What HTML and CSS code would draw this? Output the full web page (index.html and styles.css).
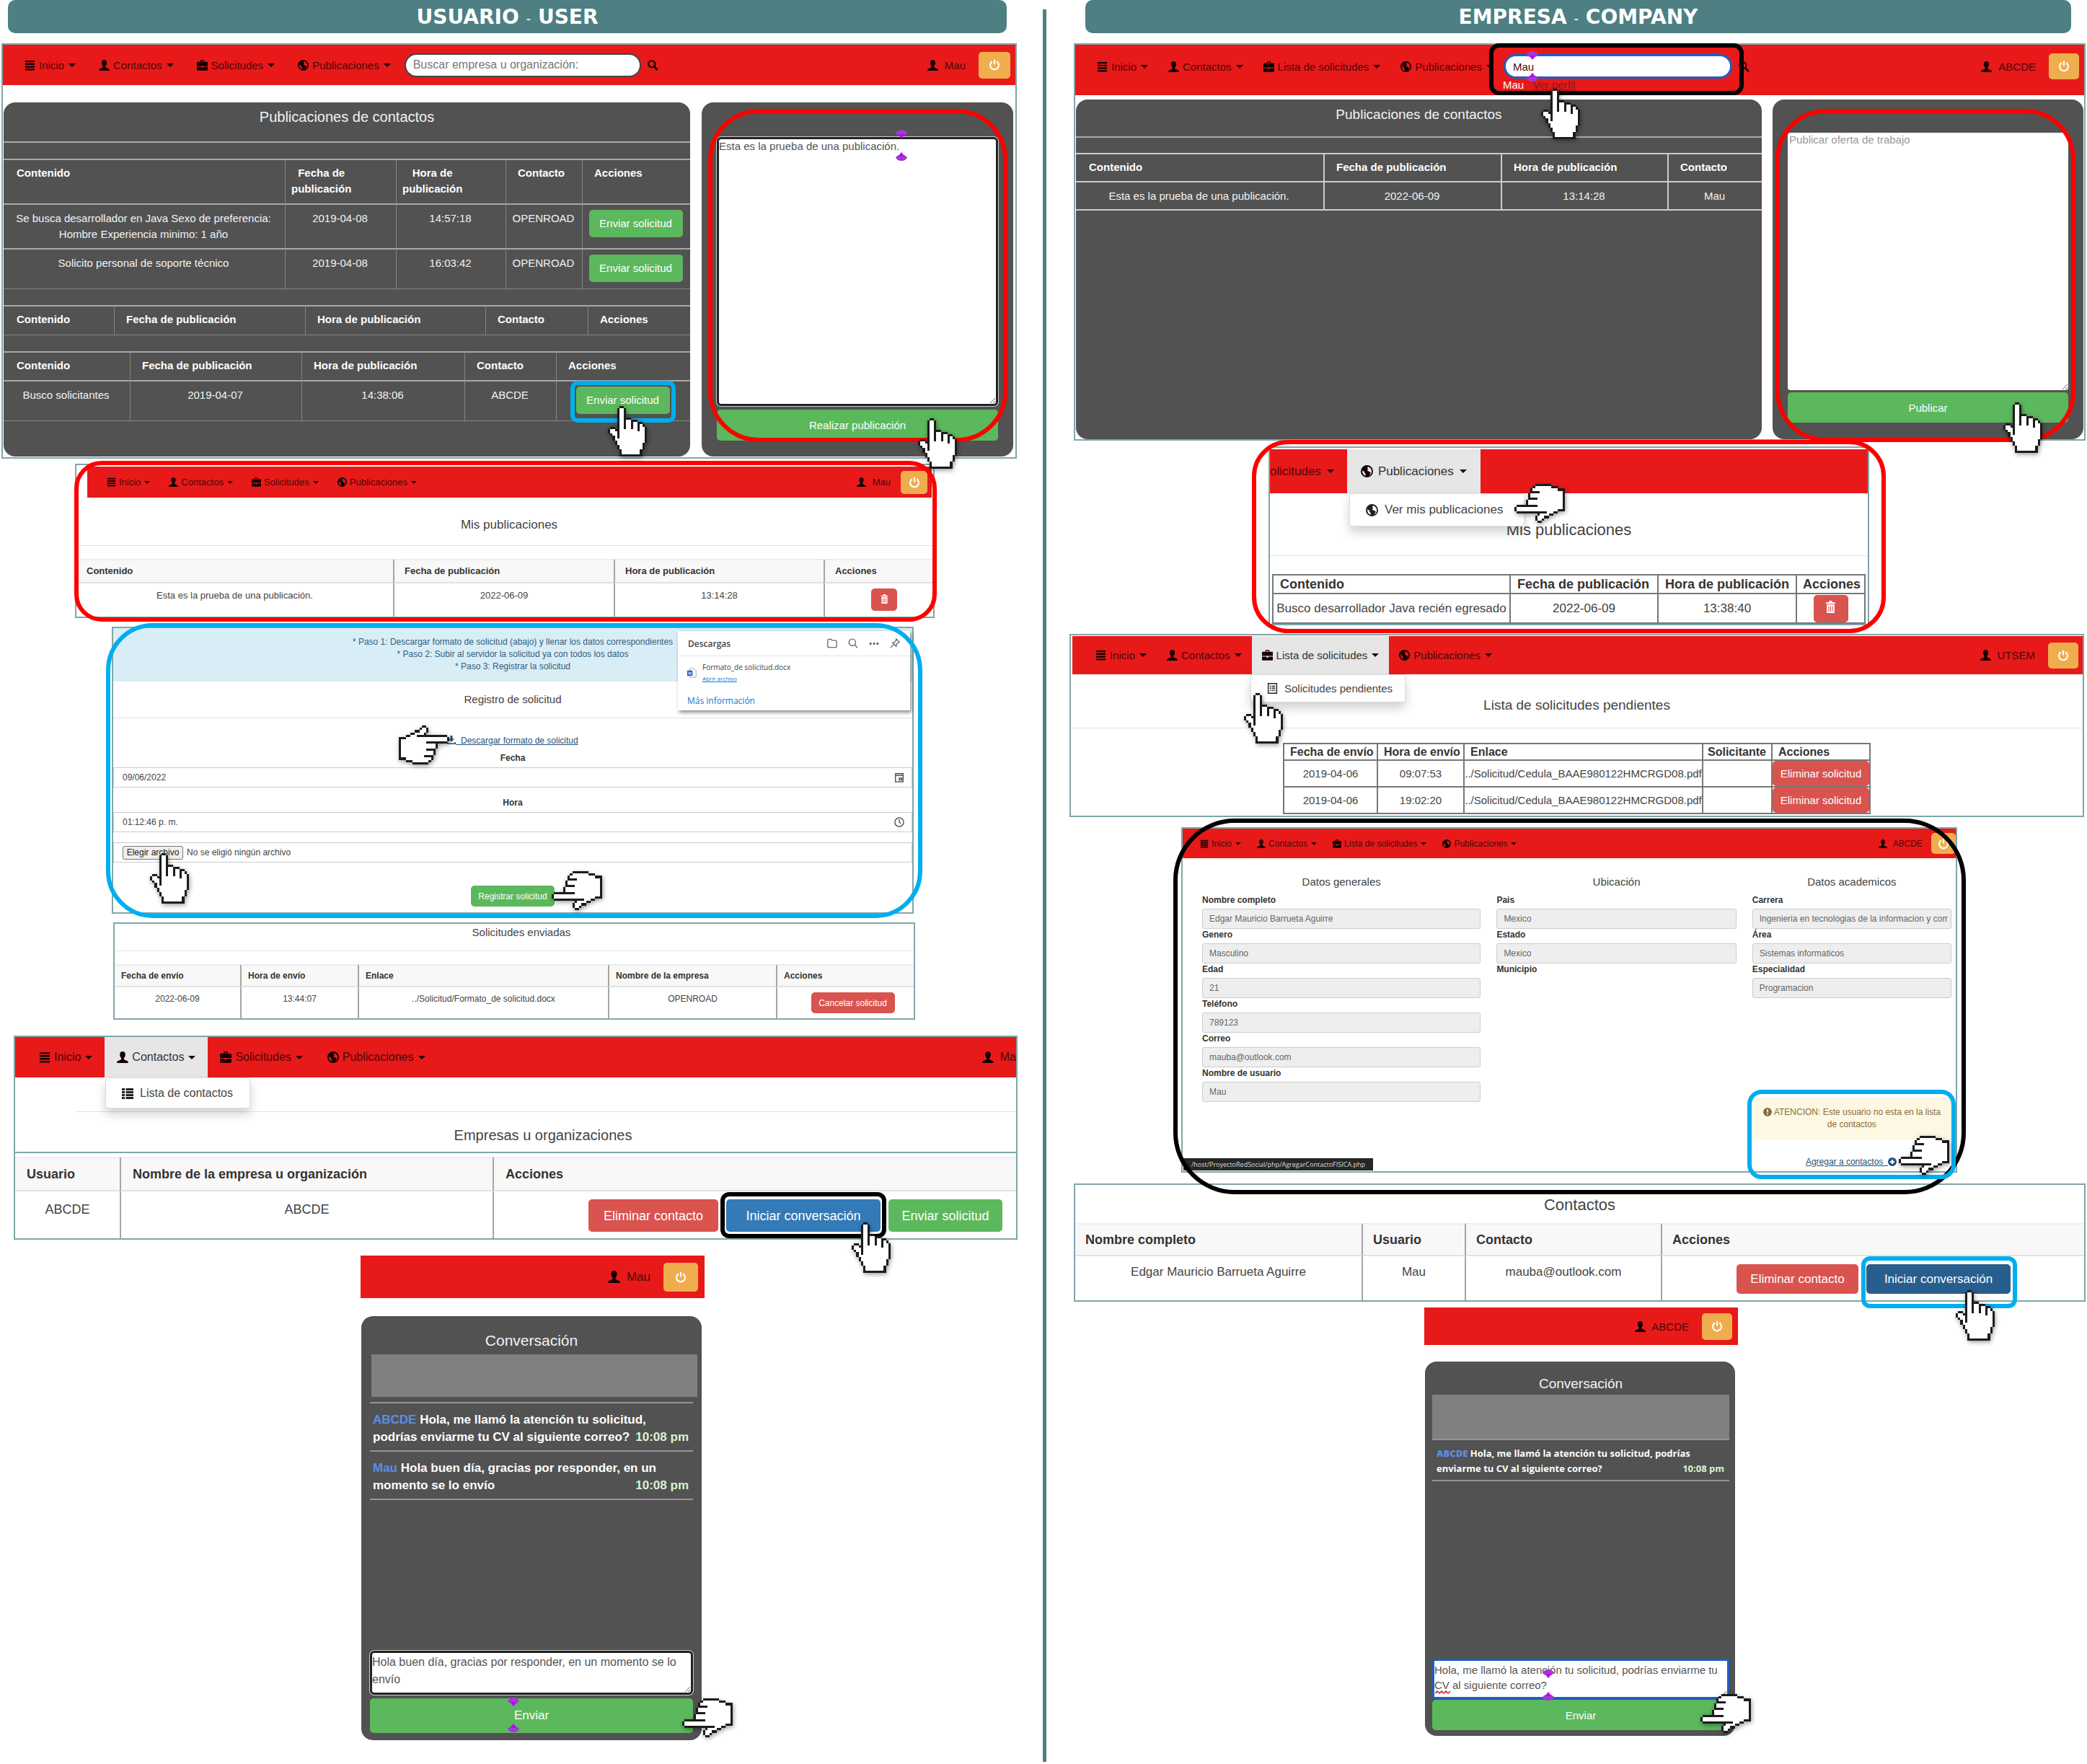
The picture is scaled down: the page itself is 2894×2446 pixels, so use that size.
FILE: index.html
```html
<!DOCTYPE html>
<html lang="es">
<head>
<meta charset="utf-8">
<meta name="viewport" content="width=device-width, initial-scale=1">
<title>Usuario - Empresa</title>
<link rel="stylesheet" href="styles.css">
</head>
<body>
<svg class="defs" aria-hidden="true">
  <symbol id="i-menu" viewBox="0 0 16 16"><path d="M1 1h14v2.500H1zM1 5h14v2.500H1zM1 9h14v2.500H1zM1 13h14v2.500H1z"/></symbol>
  <symbol id="i-user" viewBox="0 0 16 16"><path d="M8 0c2.600 0 3.800 1.800 3.800 4.200 0 2-.8 3.800-1.900 4.900v1.300c0 .5.300.8.900 1.100l3.600 1.600c1 .5 1.400 1.100 1.400 2.400v.5H.2v-.5c0-1.300.4-1.900 1.400-2.400l3.600-1.600c.6-.3.900-.6.900-1.100V9.100C5 8 4.200 6.200 4.200 4.200 4.200 1.800 5.400 0 8 0z"/></symbol>
  <symbol id="i-case" viewBox="0 0 16 16"><path fill-rule="evenodd" d="M5 3V1.500C5 .7 5.500.2 6.300.2h3.400c.8 0 1.300.5 1.300 1.300V3h3.700c.8 0 1.300.5 1.300 1.300V9H0V4.300C0 3.500.5 3 1.300 3zM6.500 3h3V1.600h-3zM0 10h6.500v1.500h3V10H16v4.400c0 .8-.5 1.300-1.300 1.300H1.300C.5 15.700 0 15.200 0 14.400z"/></symbol>
  <symbol id="i-globe" viewBox="0 0 16 16"><path fill-rule="evenodd" d="M8 0a8 8 0 1 1 0 16A8 8 0 0 1 8 0zM9.500 2.200L8.300 3.600l1.200 1.700-1.300 2 1.800.6 2.800 1.300-.4 2.600-1.800 1.900c2.400-.9 3.800-3.200 3.600-6-.2-2.600-2-4.800-4.700-5.500zM2.200 6.600C1.500 9.800 3.200 12.900 6 13.900l.3-2.300-1.600-1.800.3-1.500-1.600-.3z"/></symbol>
  <symbol id="i-search" viewBox="0 0 16 16"><path fill="none" stroke="currentColor" stroke-width="2.200" d="M11 6.200a4.900 4.900 0 1 1-9.800 0 4.900 4.900 0 0 1 9.800 0z"/><path fill="none" stroke="currentColor" stroke-width="3" d="M9.800 10l4.900 5"/></symbol>
  <symbol id="i-power" viewBox="0 0 16 16"><path fill="none" stroke="currentColor" stroke-width="2.200" d="M4.800 3.200a6 6 0 1 0 6.400 0M8 .8v6.700"/></symbol>
  <symbol id="i-trash" viewBox="0 0 16 16"><path fill-rule="evenodd" d="M6 0h4v2h4v2H2V2h4zM3 5h10v11H3zM5 7v7h1V7zM7.500 7v7h1V7zM10 7v7h1V7z"/></symbol>
  <symbol id="i-thlist" viewBox="0 0 16 16"><path d="M0 1h4v3H0zM0 5h4v3H0zM0 9h4v3H0zM0 13h4v3H0zM5.500 1H16v3H5.500zM5.500 5H16v3H5.500zM5.500 9H16v3H5.500zM5.500 13H16v3H5.500z"/></symbol>
  <symbol id="i-listalt" viewBox="0 0 16 16"><path fill-rule="evenodd" d="M1 0h14v16H1zM2.500 1.500v13h11v-13zM4 4h2v1.500H4zM7 4h5v1.500H7zM4 7h2v1.500H4zM7 7h5v1.500H7zM4 10h2v1.500H4zM7 10h5v1.500H7z"/></symbol>
  <symbol id="i-down" viewBox="0 0 16 16"><path d="M6 0h4v6h3.500L8 11.500 2.500 6H6zM0 12h2v2h12v-2h2v4H0z"/></symbol>
  <symbol id="i-alert" viewBox="0 0 16 16"><path fill-rule="evenodd" d="M8 0a8 8 0 1 1 0 16A8 8 0 0 1 8 0zM6.700 3l.4 6h1.800l.4-6zM6.800 10.500v2.400h2.400v-2.400z"/></symbol>
  <symbol id="i-plus" viewBox="0 0 16 16"><path fill-rule="evenodd" d="M8 0a8 8 0 1 1 0 16A8 8 0 0 1 8 0zM6.500 4v2.500H4v3h2.500V12h3V9.500H12v-3H9.500V4z"/></symbol>
  <symbol id="i-folder" viewBox="0 0 16 16"><path fill="none" stroke="currentColor" stroke-width="1.200" d="M1 3.500C1 2 1.500 1.500 3 1.500h3l2 2h5c1.500 0 2 .5 2 2v7c0 1.500-.5 2-2 2H3c-1.500 0-2-.5-2-2z"/></symbol>
  <symbol id="i-find" viewBox="0 0 16 16"><path fill="none" stroke="currentColor" stroke-width="1.300" d="M12 6.500a5.300 5.300 0 1 1-10.600 0 5.300 5.300 0 0 1 10.600 0zM10.500 10.500l4.500 4.800"/></symbol>
  <symbol id="i-dots" viewBox="0 0 16 16"><path d="M1 7h3v3H1zM6.500 7h3v3h-3zM12 7h3v3h-3z"/></symbol>
  <symbol id="i-pin" viewBox="0 0 16 16"><path fill="none" stroke="currentColor" stroke-width="1.200" d="M10 1l5 5-2 1-2.500 2.500-.5 3.500-6-6 3.500-.5L10 3zM6 10l-5 5"/></symbol>
  <symbol id="i-word" viewBox="0 0 16 16"><path fill="#fff" stroke="#999" d="M4 .5h7l4 4v11H4z"/><path fill="#185abd" d="M0 4h9v9H0z"/><path fill="none" stroke="#fff" d="M2 6l1.200 5 1.300-4 1.300 4L7 6"/></symbol>
  <symbol id="i-cal" viewBox="0 0 16 16"><path fill="none" stroke="currentColor" stroke-width="1.500" d="M2 2h12v13H2zM2 5h12M8 9h4v3H8z"/></symbol>
  <symbol id="i-clock" viewBox="0 0 16 16"><path fill="none" stroke="currentColor" stroke-width="1.500" d="M15 8A7 7 0 1 1 1 8a7 7 0 0 1 14 0zM8 3.500V8l2.500 2"/></symbol>
  <symbol id="mark" viewBox="0 0 16 12"><path fill="#a03cd0" d="M0 5C1 2 4 0 8 0s7 2 8 5c-1 1-3 2-4 3H4C3 7 1 6 0 5z"/><path fill="#bf00ff" d="M4 6h8c-1 2-2 4-4 6-2-2-3-4-4-6z"/></symbol>
  <g id="hand-art" shape-rendering="crispEdges"><path fill="#fff" d="M5 1H7V6H10V7H13V8H15V9H16V16H15V19H14V21H6V19H5V17H4V15H3V13H2V12H1V10H3V11H5z"/><path fill="#1c1c1c" d="M5 0h2v1h-2zM4 1h1v13h-1zM7 1h1v9h-1zM8 5h2v1h-2zM10 6h1v4h-1zM11 6h2v1h-2zM13 7h1v4h-1zM14 7h1v1h-1zM15 8h1v1h-1zM16 9h1v7h-1zM15 16h1v3h-1zM14 19h1v3h-1zM5 21h10v1h-10zM5 19h1v3h-1zM4 17h1v2h-1zM3 15h1v2h-1zM2 13h1v2h-1zM1 12h1v1h-1zM0 10h1v2h-1zM1 9h2v1h-2zM3 10h1v1h-1z"/></g>
  <symbol id="hand-up" viewBox="0 0 17 22"><use href="#hand-art"/></symbol>
  <symbol id="hand-right" viewBox="0 0 22 17"><use href="#hand-art" transform="translate(22 0) rotate(90)"/></symbol>
  <symbol id="hand-left" viewBox="0 0 22 17"><use href="#hand-art" transform="translate(0 17) rotate(-90)"/></symbol>
</svg>

<main class="board">
  <section class="side">
    <h1 class="banner banner-user">USUARIO <span>-</span> USER</h1>

    <section class="screen s-home">
      <nav class="nav">
        <a href="#"><svg class="ic"><use href="#i-menu"/></svg>Inicio<i class="caret"></i></a>
        <a href="#"><svg class="ic"><use href="#i-user"/></svg>Contactos<i class="caret"></i></a>
        <a href="#"><svg class="ic"><use href="#i-case"/></svg>Solicitudes<i class="caret"></i></a>
        <a href="#"><svg class="ic"><use href="#i-globe"/></svg>Publicaciones<i class="caret"></i></a>
        <input class="search" type="text" aria-label="Buscar" placeholder="Buscar empresa u organización:">
        <svg class="ic lens"><use href="#i-search"/></svg>
        <span class="who"><svg class="ic"><use href="#i-user"/></svg>Mau</span>
        <button class="power" aria-label="Salir"><svg class="ic"><use href="#i-power"/></svg></button>
      </nav>
      <div class="panels">
        <div class="panel">
          <h2>Publicaciones de contactos</h2>
          <hr>
          <table class="dark t1">
            <tr><th>Contenido</th><th><span>Fecha de<br>publicación</span></th><th><span>Hora de<br>publicación</span></th><th>Contacto</th><th>Acciones</th></tr>
            <tr><td>Se busca desarrollador en Java Sexo de preferencia: Hombre Experiencia minimo: 1 año</td><td>2019-04-08</td><td>14:57:18</td><td>OPENROAD</td><td><button class="btn green">Enviar solicitud</button></td></tr>
            <tr><td>Solicito personal de soporte técnico</td><td>2019-04-08</td><td>16:03:42</td><td>OPENROAD</td><td><button class="btn green">Enviar solicitud</button></td></tr>
          </table>
          <table class="dark t2">
            <tr><th>Contenido</th><th>Fecha de publicación</th><th>Hora de publicación</th><th>Contacto</th><th>Acciones</th></tr>
          </table>
          <table class="dark t3">
            <tr><th>Contenido</th><th>Fecha de publicación</th><th>Hora de publicación</th><th>Contacto</th><th>Acciones</th></tr>
            <tr><td>Busco solicitantes</td><td>2019-04-07</td><td>14:38:06</td><td>ABCDE</td><td><button class="btn green">Enviar solicitud</button></td></tr>
          </table>
        </div>
        <div class="panel post">
          <textarea class="focus-dark" aria-label="Publicación">Esta es la prueba de una publicación.</textarea>
          <button class="btn green">Realizar publicación</button>
        </div>
      </div>
      <div class="hl cyan h-send"></div>
      <div class="hl red h-post"></div>
      <svg class="mark m1"><use href="#mark"/></svg>
      <svg class="mark flip m2"><use href="#mark"/></svg>
      <svg class="hand p-send"><use href="#hand-up"/></svg>
      <svg class="hand p-post"><use href="#hand-up"/></svg>
    </section>

    <section class="screen s-mine">
      <nav class="nav">
        <a href="#"><svg class="ic"><use href="#i-menu"/></svg>Inicio<i class="caret"></i></a>
        <a href="#"><svg class="ic"><use href="#i-user"/></svg>Contactos<i class="caret"></i></a>
        <a href="#"><svg class="ic"><use href="#i-case"/></svg>Solicitudes<i class="caret"></i></a>
        <a href="#"><svg class="ic"><use href="#i-globe"/></svg>Publicaciones<i class="caret"></i></a>
        <span class="who"><svg class="ic"><use href="#i-user"/></svg>Mau</span>
        <button class="power" aria-label="Salir"><svg class="ic"><use href="#i-power"/></svg></button>
      </nav>
      <h2>Mis publicaciones</h2>
      <hr>
      <table class="light">
        <tr><th>Contenido</th><th>Fecha de publicación</th><th>Hora de publicación</th><th>Acciones</th></tr>
        <tr><td>Esta es la prueba de una publicación.</td><td>2022-06-09</td><td>13:14:28</td><td><button class="btn danger" aria-label="Eliminar"><svg class="ic"><use href="#i-trash"/></svg></button></td></tr>
      </table>
      <div class="hl red h-mine"></div>
    </section>

    <section class="screen s-register">
      <p class="steps">* Paso 1: Descargar formato de solicitud (abajo) y llenar los datos correspondientes<br>* Paso 2: Subir al servidor la solicitud ya con todos los datos<br>* Paso 3: Registrar la solicitud</p>
      <h2>Registro de solicitud</h2>
      <hr>
      <a class="dl" href="#"><svg class="ic"><use href="#i-down"/></svg>&nbsp; Descargar formato de solicitud</a>
      <label for="fecha">Fecha</label>
      <div class="field"><input id="fecha" type="text" value="09/06/2022"><svg class="ic"><use href="#i-cal"/></svg></div>
      <label class="lhora" for="hora">Hora</label>
      <div class="field"><input id="hora" type="text" value="01:12:46 p. m."><svg class="ic"><use href="#i-clock"/></svg></div>
      <div class="field file"><button>Elegir archivo</button><span>No se eligió ningún archivo</span></div>
      <button class="btn green">Registrar solicitud</button>
      <aside class="downloads">
        <header><b>Descargas</b><svg class="ic"><use href="#i-folder"/></svg><svg class="ic"><use href="#i-find"/></svg><svg class="ic"><use href="#i-dots"/></svg><svg class="ic"><use href="#i-pin"/></svg></header>
        <div class="dfile"><svg class="ic"><use href="#i-word"/></svg><span>Formato_de solicitud.docx<a href="#">Abrir archivo</a></span></div>
        <a class="more" href="#">Más información</a>
      </aside>
      <div class="hl cyan h-register"></div>
      <svg class="hand wide p-dl"><use href="#hand-right"/></svg>
      <svg class="hand p-file"><use href="#hand-up"/></svg>
      <svg class="hand wide p-reg"><use href="#hand-left"/></svg>
    </section>

    <section class="screen s-sent">
      <h2>Solicitudes enviadas</h2>
      <hr>
      <table class="light">
        <tr><th>Fecha de envío</th><th>Hora de envío</th><th>Enlace</th><th>Nombre de la empresa</th><th>Acciones</th></tr>
        <tr><td>2022-06-09</td><td>13:44:07</td><td>../Solicitud/Formato_de solicitud.docx</td><td>OPENROAD</td><td><button class="btn danger">Cancelar solicitud</button></td></tr>
      </table>
    </section>

    <section class="screen s-orgs">
      <nav class="nav">
        <a href="#"><svg class="ic"><use href="#i-menu"/></svg>Inicio<i class="caret"></i></a>
        <a class="open" href="#"><svg class="ic"><use href="#i-user"/></svg>Contactos<i class="caret"></i></a>
        <a href="#"><svg class="ic"><use href="#i-case"/></svg>Solicitudes<i class="caret"></i></a>
        <a href="#"><svg class="ic"><use href="#i-globe"/></svg>Publicaciones<i class="caret"></i></a>
        <span class="who"><svg class="ic"><use href="#i-user"/></svg>Ma</span>
      </nav>
      <a class="drop" href="#"><svg class="ic"><use href="#i-thlist"/></svg>Lista de contactos</a>
      <hr>
      <h2>Empresas u organizaciones</h2>
    </section>
    <section class="screen s-orglist">
      <table class="light">
        <tr><th>Usuario</th><th>Nombre de la empresa u organización</th><th>Acciones</th></tr>
        <tr><td>ABCDE</td><td>ABCDE</td><td><div class="acts"><button class="btn danger">Eliminar contacto</button><button class="btn blue">Iniciar conversación</button><button class="btn green">Enviar solicitud</button></div></td></tr>
      </table>
      <div class="hl black h-talk"></div>
      <svg class="hand p-talk"><use href="#hand-up"/></svg>
    </section>

    <section class="chat c-user">
      <nav class="nav">
        <span class="who"><svg class="ic"><use href="#i-user"/></svg>Mau</span>
        <button class="power" aria-label="Salir"><svg class="ic"><use href="#i-power"/></svg></button>
      </nav>
      <div class="panel">
        <h2>Conversación</h2>
        <div class="blank"></div>
        <div class="msgs">
          <p><b>ABCDE</b> Hola, me llamó la atención tu solicitud,<br>podrías enviarme tu CV al siguiente correo?<time>10:08 pm</time></p>
          <p><b>Mau</b> Hola buen día, gracias por responder, en un<br>momento se lo envío<time>10:08 pm</time></p>
        </div>
        <div class="compose">
          <textarea class="focus-dark" aria-label="Mensaje">Hola buen día, gracias por responder, en un momento se lo envío</textarea>
          <button class="btn green">Enviar</button>
        </div>
      </div>
      <svg class="mark m3"><use href="#mark"/></svg>
      <svg class="mark flip m4"><use href="#mark"/></svg>
      <svg class="hand wide p-chat"><use href="#hand-left"/></svg>
    </section>
  </section>

  <div class="divider"></div>

  <section class="side">
    <h1 class="banner banner-company">EMPRESA <span>-</span> COMPANY</h1>

    <section class="screen s-company">
      <nav class="nav">
        <a href="#"><svg class="ic"><use href="#i-menu"/></svg>Inicio<i class="caret"></i></a>
        <a href="#"><svg class="ic"><use href="#i-user"/></svg>Contactos<i class="caret"></i></a>
        <a href="#"><svg class="ic"><use href="#i-case"/></svg>Lista de solicitudes<i class="caret"></i></a>
        <a href="#"><svg class="ic"><use href="#i-globe"/></svg>Publicaciones<i class="caret"></i></a>
        <input class="search" type="text" aria-label="Buscar" value="Mau">
        <svg class="ic lens"><use href="#i-search"/></svg>
        <span class="who"><svg class="ic"><use href="#i-user"/></svg>ABCDE</span>
        <button class="power" aria-label="Salir"><svg class="ic"><use href="#i-power"/></svg></button>
      </nav>
      <div class="suggest">Mau <a href="#">Ver perfil</a></div>
      <div class="panels">
        <div class="panel">
          <h2>Publicaciones de contactos</h2>
          <hr>
          <table class="dark t4">
            <tr><th>Contenido</th><th>Fecha de publicación</th><th>Hora de publicación</th><th>Contacto</th></tr>
            <tr><td>Esta es la prueba de una publicación.</td><td>2022-06-09</td><td>13:14:28</td><td>Mau</td></tr>
          </table>
        </div>
        <div class="panel post">
          <textarea aria-label="Oferta" placeholder="Publicar oferta de trabajo"></textarea>
          <button class="btn green">Publicar</button>
        </div>
      </div>
      <div class="hl black h-search"></div>
      <div class="hl red h-offer"></div>
      <svg class="mark m5"><use href="#mark"/></svg>
      <svg class="mark flip m6"><use href="#mark"/></svg>
      <svg class="hand p-search"><use href="#hand-up"/></svg>
      <svg class="hand p-offer"><use href="#hand-up"/></svg>
    </section>

    <section class="screen s-pubs">
      <nav class="nav">
        <a class="cut" href="#">olicitudes<i class="caret"></i></a>
        <a class="open" href="#"><svg class="ic"><use href="#i-globe"/></svg>Publicaciones<i class="caret"></i></a>
      </nav>
      <a class="drop" href="#"><svg class="ic"><use href="#i-globe"/></svg>Ver mis publicaciones</a>
      <h2>Mis publicaciones</h2>
      <hr>
      <table class="ruled">
        <tr><th>Contenido</th><th>Fecha de publicación</th><th>Hora de publicación</th><th>Acciones</th></tr>
        <tr><td>Busco desarrollador Java recién egresado</td><td>2022-06-09</td><td>13:38:40</td><td><button class="btn danger" aria-label="Eliminar"><svg class="ic"><use href="#i-trash"/></svg></button></td></tr>
      </table>
      <div class="hl red h-pubs"></div>
      <svg class="hand wide p-pubs"><use href="#hand-left"/></svg>
    </section>

    <section class="screen s-pending">
      <nav class="nav">
        <a href="#"><svg class="ic"><use href="#i-menu"/></svg>Inicio<i class="caret"></i></a>
        <a href="#"><svg class="ic"><use href="#i-user"/></svg>Contactos<i class="caret"></i></a>
        <a class="open" href="#"><svg class="ic"><use href="#i-case"/></svg>Lista de solicitudes<i class="caret"></i></a>
        <a href="#"><svg class="ic"><use href="#i-globe"/></svg>Publicaciones<i class="caret"></i></a>
        <span class="who"><svg class="ic"><use href="#i-user"/></svg>UTSEM</span>
        <button class="power" aria-label="Salir"><svg class="ic"><use href="#i-power"/></svg></button>
      </nav>
      <a class="drop" href="#"><svg class="ic"><use href="#i-listalt"/></svg>Solicitudes pendientes</a>
      <h2>Lista de solicitudes pendientes</h2>
      <hr>
      <table class="ruled">
        <tr><th>Fecha de envío</th><th>Hora de envío</th><th>Enlace</th><th>Solicitante</th><th>Acciones</th></tr>
        <tr><td>2019-04-06</td><td>09:07:53</td><td>../Solicitud/Cedula_BAAE980122HMCRGD08.pdf</td><td></td><td><button class="btn danger">Eliminar solicitud</button></td></tr>
        <tr><td>2019-04-06</td><td>19:02:20</td><td>../Solicitud/Cedula_BAAE980122HMCRGD08.pdf</td><td></td><td><button class="btn danger">Eliminar solicitud</button></td></tr>
      </table>
      <svg class="hand p-pending"><use href="#hand-up"/></svg>
    </section>

    <section class="screen s-profile">
      <nav class="nav">
        <a href="#"><svg class="ic"><use href="#i-menu"/></svg>Inicio<i class="caret"></i></a>
        <a href="#"><svg class="ic"><use href="#i-user"/></svg>Contactos<i class="caret"></i></a>
        <a href="#"><svg class="ic"><use href="#i-case"/></svg>Lista de solicitudes<i class="caret"></i></a>
        <a href="#"><svg class="ic"><use href="#i-globe"/></svg>Publicaciones<i class="caret"></i></a>
        <span class="who"><svg class="ic"><use href="#i-user"/></svg>ABCDE</span>
        <button class="power" aria-label="Salir"><svg class="ic"><use href="#i-power"/></svg></button>
      </nav>
      <div class="cols">
        <div>
          <h2>Datos generales</h2>
          <label for="f1">Nombre completo</label><input id="f1" type="text" readonly value="Edgar Mauricio Barrueta Aguirre">
          <label for="f2">Genero</label><input id="f2" type="text" readonly value="Masculino">
          <label for="f3">Edad</label><input id="f3" type="text" readonly value="21">
          <label for="f4">Teléfono</label><input id="f4" type="text" readonly value="789123">
          <label for="f5">Correo</label><input id="f5" type="text" readonly value="mauba@outlook.com">
          <label for="f6">Nombre de usuario</label><input id="f6" type="text" readonly value="Mau">
        </div>
        <div>
          <h2>Ubicación</h2>
          <label for="f7">Pais</label><input id="f7" type="text" readonly value="Mexico">
          <label for="f8">Estado</label><input id="f8" type="text" readonly value="Mexico">
          <label>Municipio</label>
        </div>
        <div>
          <h2>Datos academicos</h2>
          <label for="f9">Carrera</label><input id="f9" type="text" readonly value="Ingenieria en tecnologias de la informacion y com">
          <label for="f10">Área</label><input id="f10" type="text" readonly value="Sistemas informaticos">
          <label for="f11">Especialidad</label><input id="f11" type="text" readonly value="Programacion">
          <p class="warn"><svg class="ic"><use href="#i-alert"/></svg>&nbsp;ATENCION: Este usuario no esta en la lista<br>de contactos</p>
          <a class="add" href="#">Agregar a contactos &nbsp;<svg class="ic"><use href="#i-plus"/></svg></a>
        </div>
      </div>
      <div class="status">/host/ProyectoRedSocial/php/AgregarContactoFISICA.php</div>
      <div class="hl black h-profile"></div>
      <div class="hl cyan h-add"></div>
      <svg class="hand wide p-add"><use href="#hand-left"/></svg>
    </section>

    <section class="screen s-contacts">
      <h2>Contactos</h2>
      <table class="light">
        <tr><th>Nombre completo</th><th>Usuario</th><th>Contacto</th><th>Acciones</th></tr>
        <tr><td>Edgar Mauricio Barrueta Aguirre</td><td>Mau</td><td>mauba@outlook.com</td><td><div class="acts"><button class="btn danger">Eliminar contacto</button><button class="btn navy">Iniciar conversación</button></div></td></tr>
      </table>
      <div class="hl cyan h-start"></div>
      <svg class="hand p-start"><use href="#hand-up"/></svg>
    </section>

    <section class="chat c-company">
      <nav class="nav">
        <span class="who"><svg class="ic"><use href="#i-user"/></svg>ABCDE</span>
        <button class="power" aria-label="Salir"><svg class="ic"><use href="#i-power"/></svg></button>
      </nav>
      <div class="panel">
        <h2>Conversación</h2>
        <div class="blank"></div>
        <div class="msgs">
          <p><b>ABCDE</b> Hola, me llamó la atención tu solicitud, podrías<br>enviarme tu CV al siguiente correo?<time>10:08 pm</time></p>
        </div>
        <div class="compose">
          <textarea class="focus-blue" aria-label="Mensaje">Hola, me llamó la atención tu solicitud, podrías enviarme tu CV al siguiente correo?</textarea>
          <button class="btn green">Enviar</button>
        </div>
      </div>
      <svg class="squiggle" viewBox="0 0 22 5"><path fill="none" stroke="#e02020" stroke-width="1.500" d="M0 4l3-3 3 3 3-3 3 3 3-3 3 3 3-3"/></svg>
      <svg class="mark m7"><use href="#mark"/></svg>
      <svg class="mark flip m8"><use href="#mark"/></svg>
      <svg class="hand wide p-chat"><use href="#hand-left"/></svg>
    </section>
  </section>
</main>
</body>
</html>
```
FILE: styles.css
```css
* { box-sizing: border-box; }
body { margin: 0; background: #fff; color: #444; font-family: "Liberation Sans", Arial, sans-serif; font-size: 15px; }
h1, h2, p { margin: 0; font-weight: 400; }
a { color: inherit; text-decoration: none; }
button, input, textarea { font: inherit; color: inherit; margin: 0; }
hr { height: 1px; border: 0; margin: 0; background: #e2e2e2; }
table { width: 100%; border-collapse: separate; border-spacing: 0; table-layout: fixed; }
th, td { padding: 0; vertical-align: top; white-space: nowrap; }
th { text-align: left; font-weight: 700; }
td { text-align: center; }
.defs { position: absolute; width: 0; height: 0; }
.ic { width: 1em; height: 1em; flex: none; fill: currentColor; }

.board { display: grid; grid-template-columns: 1446fr 5px 1443fr; min-height: 100vh; }
.side { min-width: 0; }
.divider { background: #4d7f83; margin: 13px 0 3px; }
.banner { height: 46px; line-height: 48px; border-radius: 10px; background: #4d7f83; color: #fff; text-align: center; font-family: "DejaVu Sans", sans-serif; font-weight: 700; font-size: 28px; }
.banner span { font-family: "Liberation Sans", sans-serif; font-weight: 400; font-size: 20px; }
.banner-user { margin: 0 50px 14px 11px; }
.banner-company { margin: 0 22px 14px 54px; }

/* framed screens */
.screen { position: relative; border: 2px solid #7fa6a9; }
.screen h2, .chat h2 { text-align: center; }

/* navigation bar */
.nav { display: flex; align-items: center; background: #e81919; color: #4c0707; overflow: hidden; }
.nav .ic { color: #140000; }
.nav a { display: flex; align-items: center; gap: 5px; height: 100%; padding: 0 16px; white-space: nowrap; }
.nav a.open { background: #e6e6e6; color: #333; }
.caret { border: 5px solid transparent; border-top-color: #240202; border-bottom: 0; margin-left: 1px; }
.who { display: flex; align-items: center; gap: 9px; margin-left: auto; margin-right: 18px; }
.power { display: flex; align-items: center; justify-content: center; border: 0; border-radius: 5px; background: #f0ad4e; flex: none; }
.nav .power .ic { color: #fff; width: 16px; height: 16px; }
.search { border: 2px solid #444; border-radius: 17px; background: #fff; padding: 0 10px; height: 33px; width: 328px; font-size: 16px; }
.search::placeholder { color: #777; opacity: 1; }
.lens { margin-left: 9px; }
.drop { position: absolute; z-index: 2; display: flex; align-items: center; gap: 9px; background: #fff; border: 1px solid #ddd; border-radius: 0 0 4px 4px; box-shadow: 0 8px 14px rgba(0, 0, 0, .18); white-space: nowrap; padding-left: 22px; }
.drop .ic { color: #222; }

/* buttons */
.btn { border: 0; border-radius: 5px; color: #fff; padding: 0; white-space: nowrap; }
.green { background: #5cb85c; }
.danger { background: #d9534f; }
.blue { background: #337ab7; }
.navy { background: #285e8e; }
.acts { display: flex; justify-content: flex-end; gap: 11px; }

/* dark panels */
.panel { background: #525252; border-radius: 16px; color: #f2f2f2; }
.panels { display: grid; }
.panels hr { height: 2px; background: #a8a8a8; }
.dark th, .dark td { line-height: 22px; border-top: 2px solid #a8a8a8; border-left: 1px solid #858585; padding: 7px 8px; }
.dark th { padding-left: 18px; color: #fff; }
.dark th + th { padding-left: 16px; }
.dark td { padding: 8px 6px 7px 4px; white-space: normal; }
.dark th:first-child, .dark td:first-child { border-left: 0; }
.dark tr:last-child > * { border-bottom: 1px solid #858585; }
.dark .btn { width: 130px; height: 38px; margin-top: -1px; }
.post { display: flex; flex-direction: column; padding: 0 21px; }
textarea { display: block; width: 100%; resize: vertical; border: 0; border-radius: 4px; padding: 1px 2px; background: #fff; color: #555; overflow: hidden; }
textarea::placeholder { color: #999; opacity: 1; }
.focus-dark { border: 3px solid #222; box-shadow: 0 0 0 1px #ccc; border-radius: 6px; padding: 1px 0; }
.focus-blue { border: 3px solid #1a5fc8; }

/* light tables */
.light th { background: #f8f8f8; border-top: 2px solid #eee; border-bottom: 2px solid #e2e2e2; color: #333; }
.light th + th, .light td + td { border-left: 2px solid #a5a5a5; }
.ruled { border-collapse: collapse; }
.ruled th, .ruled td { border: 2px solid #777; }
.ruled th { color: #333; padding-left: 9px; }
.ruled td { vertical-align: middle; }

/* annotations */
.hl { position: absolute; z-index: 3; border: 6px solid; pointer-events: none; }
.hl.red { border-color: #f00; }
.hl.cyan { border-color: #00aeef; }
.hl.black { border-color: #000; }
.hand { position: absolute; z-index: 5; width: 54px; height: 70px; filter: drop-shadow(1px 2px 3px rgba(0, 0, 0, .4)); }
.hand.wide { width: 70px; height: 54px; }
.mark { position: absolute; z-index: 4; width: 16px; height: 12px; }
.mark.flip { transform: scaleY(-1); }

/* user home */
.s-home { margin: 0 36px 7px 2px; }
.s-home .nav { height: 56px; padding-left: 14px; }
.s-home .search { margin-left: 3px; }
.s-home .power { width: 44px; height: 37px; margin-right: 7px; }
.s-home .panels { grid-template-columns: 952fr 432fr; gap: 16px; padding: 24px 3px 1px 1px; }
.s-home .panel { min-height: 491px; }
.s-home h2 { padding-top: 8px; font-size: 20px; line-height: 24px; margin-bottom: 22px; }
.s-home table { margin-top: 22px; }
.t1 tr > * { height: 62px; }
.t1 tr:last-child > * { height: 57px; }
.t1 th:nth-child(1) { width: 390px; }
.t1 th:nth-child(2) { width: 154px; }
.t1 th:nth-child(3) { width: 152px; }
.t1 th:nth-child(4) { width: 106px; }
.t1 th span { display: inline-block; text-align: center; margin-left: -8px; }
.t2 th { height: 42px; }
.t2 th:nth-child(1) { width: 153px; }
.t2 th:nth-child(2) { width: 265px; }
.t2 th:nth-child(3) { width: 250px; }
.t2 th:nth-child(4) { width: 142px; }
.t3 th { height: 40px; }
.t3 td { height: 57px; }
.t3 th:nth-child(1) { width: 175px; }
.t3 th:nth-child(2) { width: 238px; }
.t3 th:nth-child(3) { width: 226px; }
.t3 th:nth-child(4) { width: 127px; }
.s-home .post { padding-top: 48px; }
.s-home .post textarea { height: 373px; margin-bottom: 5px; }
.s-home .post .btn { height: 43px; }
.h-send { left: 787px; top: 466px; width: 146px; height: 58px; border-radius: 10px; }
.p-send { left: 839px; top: 501px; }
.h-post { right: 11px; top: 89px; width: 415px; height: 462px; border-radius: 70px; }
.p-post { right: 81px; top: 518px; }
.m1 { right: 150px; top: 118px; }
.m2 { right: 150px; top: 149px; }

/* own posts */
.s-mine { margin: 0 150px 12px 104px; font-size: 13px; }
.s-mine .nav { height: 43px; margin: 2px 2px 28px 15px; padding-left: 14px; }
.s-mine .nav a { gap: 4px; padding: 0 13px; }
.s-mine .caret, .s-profile .caret { border-width: 4px 4px 0; }
.s-mine .who { margin-right: 14px; }
.s-mine .power { width: 37px; height: 32px; margin-right: 6px; }
.s-mine h2 { font-size: 17px; line-height: 20px; margin-bottom: 18px; padding-left: 12px; }
.s-mine hr { margin-bottom: 18px; }
.s-mine th { height: 34px; line-height: 30px; padding-left: 14px; }
.s-mine td { height: 46px; line-height: 34px; }
.s-mine th:nth-child(1) { width: 439px; }
.s-mine th:nth-child(2) { width: 306px; }
.s-mine th:nth-child(3) { width: 291px; }
.s-mine td .btn { width: 36px; height: 31px; margin: 7px 0 0 14px; line-height: 12px; }
.h-mine { left: -3px; top: -6px; right: -5px; bottom: -7px; border-radius: 38px; }

/* request form */
.s-register { margin: 0 179px 12px 155px; padding-bottom: 8px; font-size: 12px; display: flex; flex-direction: column; align-items: center; }
.s-register > hr, .steps, .field { width: 100%; }
.steps { background: #d9edf7; color: #31607f; text-align: center; line-height: 17px; padding: 11px 0 12px; }
.s-register h2 { font-size: 15px; line-height: 20px; margin: 15px 0; }
.dl { margin-top: 21px; line-height: 20px; color: #23527c; text-decoration: underline; }
.dl .ic { vertical-align: -1px; }
.s-register label { margin: 4px 0 3px; line-height: 20px; font-weight: 700; color: #333; }
.s-register .lhora { margin-top: 11px; }
.field { display: flex; align-items: center; height: 28px; border: 1px solid #ccc; padding: 0 10px 0 12px; }
.field input { flex: 1; border: 0; padding: 0; background: none; }
.field .ic { width: 14px; height: 14px; }
.file { margin: 14px 0 32px; gap: 5px; }
.file button { width: 84px; height: 19px; border: 1px solid #777; border-radius: 3px; background: #efefef; color: #222; padding: 0; white-space: nowrap; }
.s-register > .btn { width: 116px; height: 29px; }
.downloads { position: absolute; z-index: 2; right: 3px; top: 4px; width: 322px; height: 110px; background: #fff; box-shadow: 2px 3px 5px rgba(0, 0, 0, .45); font-family: "Open Sans", sans-serif; font-size: 12px; color: #444; }
.downloads header { display: flex; align-items: center; gap: 15px; height: 35px; padding: 0 14px; border-bottom: 1px solid #e5e5e5; }
.downloads header .ic { width: 14px; height: 14px; }
.downloads header b { margin-right: auto; font-weight: 600; }
.dfile { display: flex; align-items: center; gap: 8px; height: 42px; padding: 4px 13px 0; font-size: 10px; line-height: 15px; }
.dfile .ic { width: 13px; height: 16px; }
.dfile a { display: block; width: max-content; font-size: 8px; text-decoration: underline; }
.downloads a { color: #0a78d0; }
.more { display: block; padding: 12px 13px 0; line-height: 16px; }
.h-register { left: -10px; top: -7px; right: -14px; bottom: -8px; border-radius: 65px; }
.p-dl { left: 396px; top: 135px; }
.p-file { left: 51px; top: 312px; }
.p-reg { left: 608px; top: 337px; }

/* sent requests */
.s-sent { margin: 0 177px 22px 157px; font-size: 12px; padding-top: 2px; }
.s-sent h2 { font-size: 15px; line-height: 20px; margin-bottom: 15px; padding-left: 20px; }
.s-sent hr { margin-bottom: 18px; }
.s-sent th { height: 32px; line-height: 28px; padding-left: 9px; }
.s-sent td { height: 43px; line-height: 32px; }
.s-sent th:nth-child(1) { width: 174px; }
.s-sent th:nth-child(2) { width: 163px; }
.s-sent th:nth-child(3) { width: 347px; }
.s-sent th:nth-child(4) { width: 233px; }
.s-sent td .btn { width: 116px; height: 29px; margin: 7px 0 0 20px; line-height: 14px; }

/* organisations */
.s-orgs { margin: 0 35px 0 19px; padding-bottom: 11px; font-size: 16px; }
.s-orgs .nav { height: 56px; padding-left: 16px; }
.s-orgs .nav a { padding: 0 17px; }
.s-orgs .who { margin-right: 0; }
.s-orgs .drop { left: 125px; top: 56px; width: 201px; height: 43px; }
.s-orgs hr { margin: 47px 0 20px 84px; }
.s-orgs h2 { font-size: 20px; line-height: 24px; padding-left: 76px; }
.s-orglist { margin: 0 35px 22px 19px; border-top: 0; padding-top: 5px; font-size: 18px; }
.s-orglist th { height: 48px; line-height: 44px; padding-left: 16px; }
.s-orglist td { height: 65px; line-height: 50px; }
.s-orglist th:nth-child(1) { width: 145px; }
.s-orglist th:nth-child(2) { width: 517px; }
.s-orglist .acts { padding: 11px 19px 0 0; line-height: 20px; }
.s-orglist .btn { height: 45px; width: 180px; }
.s-orglist .blue { width: 214px; }
.s-orglist .green { width: 158px; }
.h-talk { right: 180px; top: 54px; width: 230px; height: 64px; border-radius: 12px; }
.p-talk { right: 174px; top: 96px; }

/* conversations */
.chat { position: relative; }
.chat .panel { display: flex; flex-direction: column; }
.blank { background: #808080; }
.msgs { border-top: 2px solid #949494; color: #fff; }
.msgs p { border-bottom: 2px solid #949494; white-space: nowrap; font-weight: 700; }
.msgs b { color: #5c8ee6; }
.msgs time { float: right; color: #d9f2cf; }
.compose { margin-top: auto; }
.compose .btn { display: block; width: 100%; }
.c-user { margin: 0 469px 0 500px; font-size: 17px; }
.c-user .nav { height: 59px; }
.c-user .power { width: 48px; height: 40px; margin-right: 9px; }
.c-user .panel { margin: 25px 4px 0 1px; min-height: 588px; padding: 21px 12px 10px; }
.c-user h2 { font-size: 21px; line-height: 26px; }
.c-user .blank { height: 59px; margin: 6px -6px 7px 2px; }
.c-user .msgs p { padding: 11px 6px 6px 4px; line-height: 24px; }
.c-user textarea { height: 61px; font-size: 16px; line-height: 24px; margin-bottom: 5px; }
.c-user .compose .btn { height: 48px; }
.c-user .p-chat { left: 446px; top: 614px; }
.m3 { left: 204px; top: 613px; }
.m4 { left: 204px; top: 649px; }
.c-company { margin: 0 484px 0 524px; }
.c-company .nav { height: 52px; }
.c-company .who { gap: 8px; }
.c-company .power { width: 42px; height: 37px; margin-right: 8px; }
.c-company .panel { margin: 23px 4px 0 1px; min-height: 519px; padding: 19px 8px 8px 10px; }
.c-company h2 { font-size: 19px; line-height: 24px; }
.c-company .blank { height: 61px; margin-top: 3px; }
.c-company .msgs p { padding: 8px 7px 5px 6px; line-height: 21px; font-family: "Open Sans", sans-serif; font-size: 13px; }
.c-company textarea { height: 56px; line-height: 21px; margin-bottom: 1px; padding: 2px 0; }
.c-company .compose .btn { height: 42px; }
.c-company .p-chat { left: 383px; top: 536px; }
.squiggle { position: absolute; left: 15px; top: 531px; width: 22px; height: 5px; }
.m7 { left: 164px; top: 502px; }
.m8 { left: 164px; top: 533px; }

/* company home */
.s-company { margin: 0 2px 8px 38px; }
.s-company .nav { height: 70px; padding: 0 0 10px 16px; }
.s-company .nav a, .s-pending .nav a { padding: 0 14px; }
.s-company .search { width: 317px; height: 34px; border: 3px solid #1a5fc8; font-size: 15px; }
.s-company .power { width: 42px; height: 36px; margin-right: 7px; }
.suggest { position: absolute; left: 593px; top: 46px; line-height: 20px; color: #fff; }
.suggest a { color: #7a1f1f; text-decoration: underline; margin-left: 8px; }
.s-company .panels { grid-template-columns: 951fr 431fr; gap: 15px; padding: 6px 1px 0; }
.s-company .panel { min-height: 471px; }
.s-company h2 { padding-top: 9px; font-size: 19px; line-height: 24px; margin-bottom: 18px; }
.t4 { margin-top: 21px; }
.t4 tr > * { height: 39px; border-color: #ccc; }
.t4 th + th, .t4 td + td { border-left: 2px solid #ccc; }
.t4 tr:last-child > * { height: 41px; border-bottom: 2px solid #ccc; }
.t4 th:nth-child(1) { width: 343px; }
.t4 th:nth-child(2) { width: 246px; }
.t4 th:nth-child(3) { width: 231px; }
.s-company .post { padding-top: 46px; }
.s-company .post textarea { height: 357px; margin-bottom: 3px; }
.s-company .post .btn { height: 42px; }
.h-search { left: 574px; top: -2px; width: 353px; height: 72px; border-radius: 14px; }
.h-offer { right: 12px; top: 89px; width: 416px; height: 462px; border-radius: 70px; }
.m5 { left: 626px; top: 9px; }
.m6 { left: 626px; top: 39px; }
.p-search { left: 646px; top: 61px; }
.p-offer { right: 58px; top: 496px; }

/* company posts */
.s-pubs { margin: 0 302px 12px 308px; font-size: 17px; }
.s-pubs .nav { height: 61px; margin-top: 2px; }
.s-pubs .nav a { padding: 0 19px; gap: 7px; }
.s-pubs .nav .cut { padding: 0 18px 0 0; }
.s-pubs .drop { left: 110px; top: 63px; width: 243px; height: 46px; }
.s-pubs h2 { font-size: 22px; line-height: 26px; margin: 38px 0 22px; }
.s-pubs table { width: auto; margin: 25px 3px 0; min-width: calc(100% - 6px); }
.s-pubs th { height: 26px; font-size: 18px; line-height: 24px; }
.s-pubs th:last-child { padding-left: 8px; }
.s-pubs td { height: 41px; }
.s-pubs th:nth-child(1) { width: 329px; }
.s-pubs th:nth-child(2) { width: 205px; }
.s-pubs th:nth-child(3) { width: 192px; }
.s-pubs .btn { display: block; width: 48px; height: 38px; margin: 0 auto; }
.h-pubs { left: -25px; top: -11px; right: -25px; bottom: -13px; border-radius: 50px; }
.p-pubs { left: 339px; top: 50px; }

/* pending requests */
.s-pending { margin: 0 4px 14px 32px; padding-bottom: 2px; }
.s-pending .nav { height: 53px; margin: 1px 0 0 2px; padding-left: 18px; }
.s-pending .power { width: 42px; height: 36px; margin-right: 6px; }
.s-pending .drop { left: 249px; top: 54px; width: 215px; height: 39px; }
.s-pending h2 { font-size: 19px; line-height: 24px; margin: 31px 0 19px; }
.s-pending table { width: 815px; margin: 20px auto 0; }
.s-pending th { height: 23px; font-size: 16px; line-height: 21px; padding-left: 8px; }
.s-pending td { height: 37px; }
.s-pending th:nth-child(1) { width: 130px; }
.s-pending th:nth-child(2) { width: 120px; }
.s-pending th:nth-child(3) { width: 331px; }
.s-pending th:nth-child(4) { width: 96px; padding-left: 6px; }
.s-pending .btn { display: block; width: 100%; height: 35px; }
.p-pending { left: 240px; top: 80px; }

/* profile */
.s-profile { margin: 0 180px 15px 187px; padding-bottom: 3px; font-size: 12px; }
.s-profile .nav { height: 41px; padding-left: 13px; }
.s-profile .nav a { gap: 4px; padding: 0 11px; }
.s-profile .who { margin-right: 12px; gap: 8px; }
.s-profile .power { width: 34px; height: 29px; }
.cols { display: grid; grid-template-columns: 386fr 332fr 276fr; gap: 22px; padding: 23px 6px 0 27px; }
.cols > div { min-width: 0; }
.cols h2 { font-size: 15px; line-height: 20px; margin-bottom: 7px; }
.cols label { display: block; line-height: 16px; margin-bottom: 4px; font-weight: 700; color: #333; }
.cols input { display: block; width: 100%; height: 28px; border: 1px solid #ccc; border-radius: 3px; background: #eee; padding: 0 4px 0 9px; color: #666; }
.warn { margin-top: 138px; padding: 12px 0; line-height: 17px; text-align: center; background: #fcf8e3; color: #8a6d3b; white-space: nowrap; }
.warn .ic { vertical-align: -2px; }
.add { display: block; margin: 21px 76px 0 0; line-height: 20px; text-align: right; color: #23527c; text-decoration: underline; white-space: nowrap; }
.add .ic { vertical-align: -2px; }
.status { position: absolute; left: 1px; bottom: 1px; width: 263px; height: 17px; overflow: hidden; background: #262626; color: #ddd; font-family: "Open Sans", sans-serif; font-size: 9px; line-height: 17px; text-align: center; white-space: nowrap; }
.h-profile { left: -13px; top: -14px; right: -14px; bottom: -32px; border-radius: 85px; }
.h-add { right: 0; top: 362px; width: 289px; height: 124px; border-radius: 20px; }
.p-add { right: 9px; top: 426px; }

/* contacts */
.s-contacts { margin: 0 2px 8px 38px; font-size: 17px; padding-top: 15px; }
.s-contacts h2 { font-size: 22px; line-height: 26px; margin-bottom: 12px; }
.s-contacts th { height: 46px; font-size: 18px; line-height: 42px; padding-left: 14px; }
.s-contacts td { height: 61px; line-height: 44px; }
.s-contacts th:nth-child(1) { width: 397px; }
.s-contacts th:nth-child(2) { width: 143px; }
.s-contacts th:nth-child(3) { width: 272px; }
.s-contacts .acts { padding: 11px 102px 0 0; line-height: 20px; }
.s-contacts .btn { width: 169px; height: 41px; }
.s-contacts .navy { width: 200px; }
.h-start { right: 93px; top: 99px; width: 216px; height: 72px; border-radius: 12px; }
.p-start { right: 124px; top: 146px; }
```
